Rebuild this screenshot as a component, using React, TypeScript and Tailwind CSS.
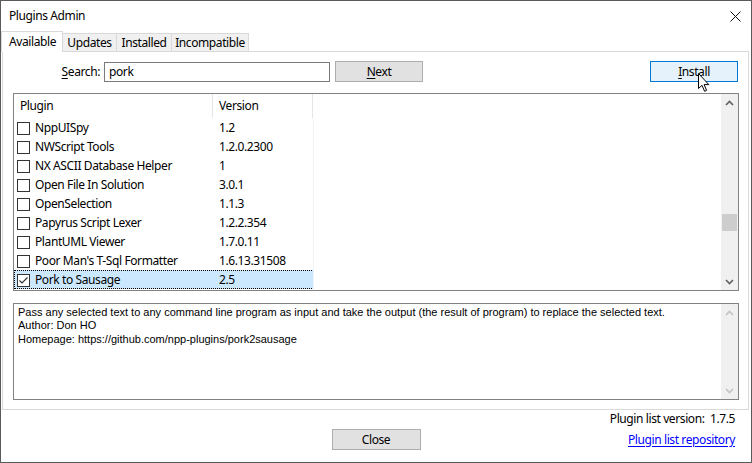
import React from "react";

const plugins: [string, string][] = [
  ["NppUISpy", "1.2"],
  ["NWScript Tools", "1.2.0.2300"],
  ["NX ASCII Database Helper", "1"],
  ["Open File In Solution", "3.0.1"],
  ["OpenSelection", "1.1.3"],
  ["Papyrus Script Lexer", "1.2.2.354"],
  ["PlantUML Viewer", "1.7.0.11"],
  ["Poor Man's T-Sql Formatter", "1.6.13.31508"],
  ["Pork to Sausage", "2.5"],
];

function Chevron({ up, color }: { up: boolean; color: string }) {
  return (
    <svg width="9" height="6" viewBox="0 0 9 6">
      <polyline
        points={up ? "1,5 4.5,1.5 8,5" : "1,1 4.5,4.5 8,1"}
        fill="none"
        stroke={color}
        strokeWidth="1.6"
      />
    </svg>
  );
}

function Checkbox({ checked }: { checked: boolean }) {
  return (
    <div className="w-[13px] h-[13px] border border-[#333333] bg-white flex items-center justify-center shrink-0">
      {checked && (
        <svg width="11" height="11" viewBox="0 0 11 11">
          <polyline points="1.5,5.5 4,8 9.5,2.5" fill="none" stroke="#333" strokeWidth="1.2" />
        </svg>
      )}
    </div>
  );
}

export default function App() {
  return (
    <div className="w-[752px] h-[463px] border border-[#5a5a5a] bg-white flex flex-col text-[12px] tracking-[-0.4px] text-black [font-family:'Noto_Sans',sans-serif] relative overflow-hidden">
      {/* Title bar */}
      <div className="h-[30px] flex items-center justify-between pl-[8px] pr-[10px] shrink-0">
        <span className="text-[12px] text-black">Plugins Admin</span>
        <svg width="11" height="11" viewBox="0 0 11 11">
          <path d="M0.5 0.5 L10.5 10.5 M10.5 0.5 L0.5 10.5" stroke="#111" strokeWidth="1" />
        </svg>
      </div>

      {/* Tabs */}
      <div className="h-[20px] flex items-end shrink-0 pl-0">
        <div className="relative z-10 h-[21px] w-[62px] -mb-[1px] bg-white border border-b-0 border-[#d9d9d9] flex items-start pl-[7px] pt-[1px]">
          Available
        </div>
        <div className="h-[18px] w-[55px] -ml-[1px] bg-[#f0f0f0] border border-b-0 border-[#d9d9d9] flex items-center justify-center">
          Updates
        </div>
        <div className="h-[18px] w-[56px] -ml-[1px] bg-[#f0f0f0] border border-b-0 border-[#d9d9d9] flex items-center justify-center">
          Installed
        </div>
        <div className="h-[18px] w-[78px] -ml-[1px] bg-[#f0f0f0] border border-b-0 border-[#d9d9d9] flex items-center justify-center">
          Incompatible
        </div>
      </div>

      {/* Panel */}
      <div className="ml-[1px] mr-[2px] h-[359px] border border-[#d9d9d9] bg-white flex flex-col shrink-0">
        {/* Search row */}
        <div className="mt-[9px] h-[21px] flex items-center">
          <div className="w-[97px] text-right">
            <span className="underline underline-offset-2">S</span>earch:
          </div>
          <div className="ml-[4px] w-[226px] h-[20px] border border-[#7a7a7a] flex items-center pl-[4px]">
            pork
          </div>
          <div className="ml-[5px] w-[88px] h-[21px] border border-[#adadad] bg-[#e1e1e1] flex items-center justify-center">
            <span>
              <span className="underline underline-offset-2">N</span>ext
            </span>
          </div>
          <div className="ml-auto mr-[10px] w-[88px] h-[21px] border border-[#0078d7] bg-[#e5f1fb] flex items-center justify-center">
            <span>
              <span className="underline underline-offset-2">I</span>nstall
            </span>
          </div>
        </div>

        {/* List */}
        <div className="mt-[11px] ml-[10px] w-[726px] h-[198px] border border-[#828282] flex">
          <div className="flex-1 flex flex-col relative">
            <div className="h-[24px] flex items-stretch">
              <div className="w-[199px] border-r border-[#e5e5e5] flex items-center pl-[6px] pb-[1px]">Plugin</div>
              <div className="w-[100px] border-r border-[#e5e5e5] flex items-center pl-[6px] pb-[1px]">Version</div>
            </div>
            <div className="absolute left-[299px] top-[24px] bottom-0 w-px bg-[#f0f4f9]" />
            {plugins.map(([name, ver], i) => {
              const sel = i === plugins.length - 1;
              return (
                <div
                  key={name}
                  className={
                    sel
                      ? "h-[19px] w-[300px] flex items-center bg-[#cce8ff] border border-dotted border-black"
                      : "h-[19px] w-[300px] flex items-center border border-transparent"
                  }
                >
                  <div className="w-[199px] flex items-center pl-[3px] -ml-px pt-[1px]">
                    <Checkbox checked={sel} />
                    <span className="ml-[5px] whitespace-nowrap">{name}</span>
                  </div>
                  <div className="pl-[6px] whitespace-nowrap pt-[1px]">{ver}</div>
                </div>
              );
            })}
          </div>
          {/* Scrollbar */}
          <div className="w-[17px] bg-[#f0f0f0] flex flex-col items-center">
            <div className="h-[17px] flex items-center justify-center">
              <Chevron up color="#606060" />
            </div>
            <div className="h-[103px]" />
            <div className="w-[15px] h-[17px] bg-[#cdcdcd]" />
            <div className="flex-1" />
            <div className="h-[17px] flex items-center justify-center">
              <Chevron up={false} color="#606060" />
            </div>
          </div>
        </div>

        {/* Description */}
        <div className="mt-[12px] ml-[10px] w-[726px] h-[97px] border border-[#828282] flex">
          <div className="flex-1 pl-[4px] pt-[2px] text-[11px] leading-[13.4px] [font-family:'Liberation_Sans',Arial,sans-serif] tracking-[0px]">
            <div>Pass any selected text to any command line program as input and take the output (the result of program) to replace the selected text.</div>
            <div>Author: Don HO</div>
            <div>Homepage: https://github.com/npp-plugins/pork2sausage</div>
          </div>
          <div className="w-[17px] bg-[#f0f0f0] flex flex-col items-center justify-between">
            <div className="h-[17px] flex items-center justify-center">
              <Chevron up color="#c2c2c2" />
            </div>
            <div className="h-[17px] flex items-center justify-center">
              <Chevron up={false} color="#c2c2c2" />
            </div>
          </div>
        </div>
      </div>

      {/* Bottom */}
      <div className="flex-1 flex flex-col">
        <div className="h-[17px] flex items-center justify-end pr-[16px]">
          <span>Plugin list version:&nbsp;&nbsp;1.7.5</span>
        </div>
        <div className="mt-[2px] grid grid-cols-[1fr_auto_1fr] items-center">
          <div />
          <div className="w-[89px] h-[21px] border border-[#adadad] bg-[#e1e1e1] flex items-center justify-center">
            Close
          </div>
          <div className="flex justify-end pr-[16px]">
            <span className="text-[#0000ff] underline underline-offset-2">Plugin list repository</span>
          </div>
        </div>
      </div>

      {/* Mouse cursor over Install */}
      <svg
        className="absolute left-[697px] top-[72px] z-20"
        width="12"
        height="19"
        viewBox="0 0 12 19"
      >
        <path
          d="M0.5 0.5 L0.5 15.5 L4 12.3 L6.6 18.3 L8.6 17.4 L6.1 11.6 L10.8 11.6 Z"
          fill="#fff"
          stroke="#000"
          strokeWidth="1"
          strokeLinejoin="miter"
        />
      </svg>
    </div>
  );
}
